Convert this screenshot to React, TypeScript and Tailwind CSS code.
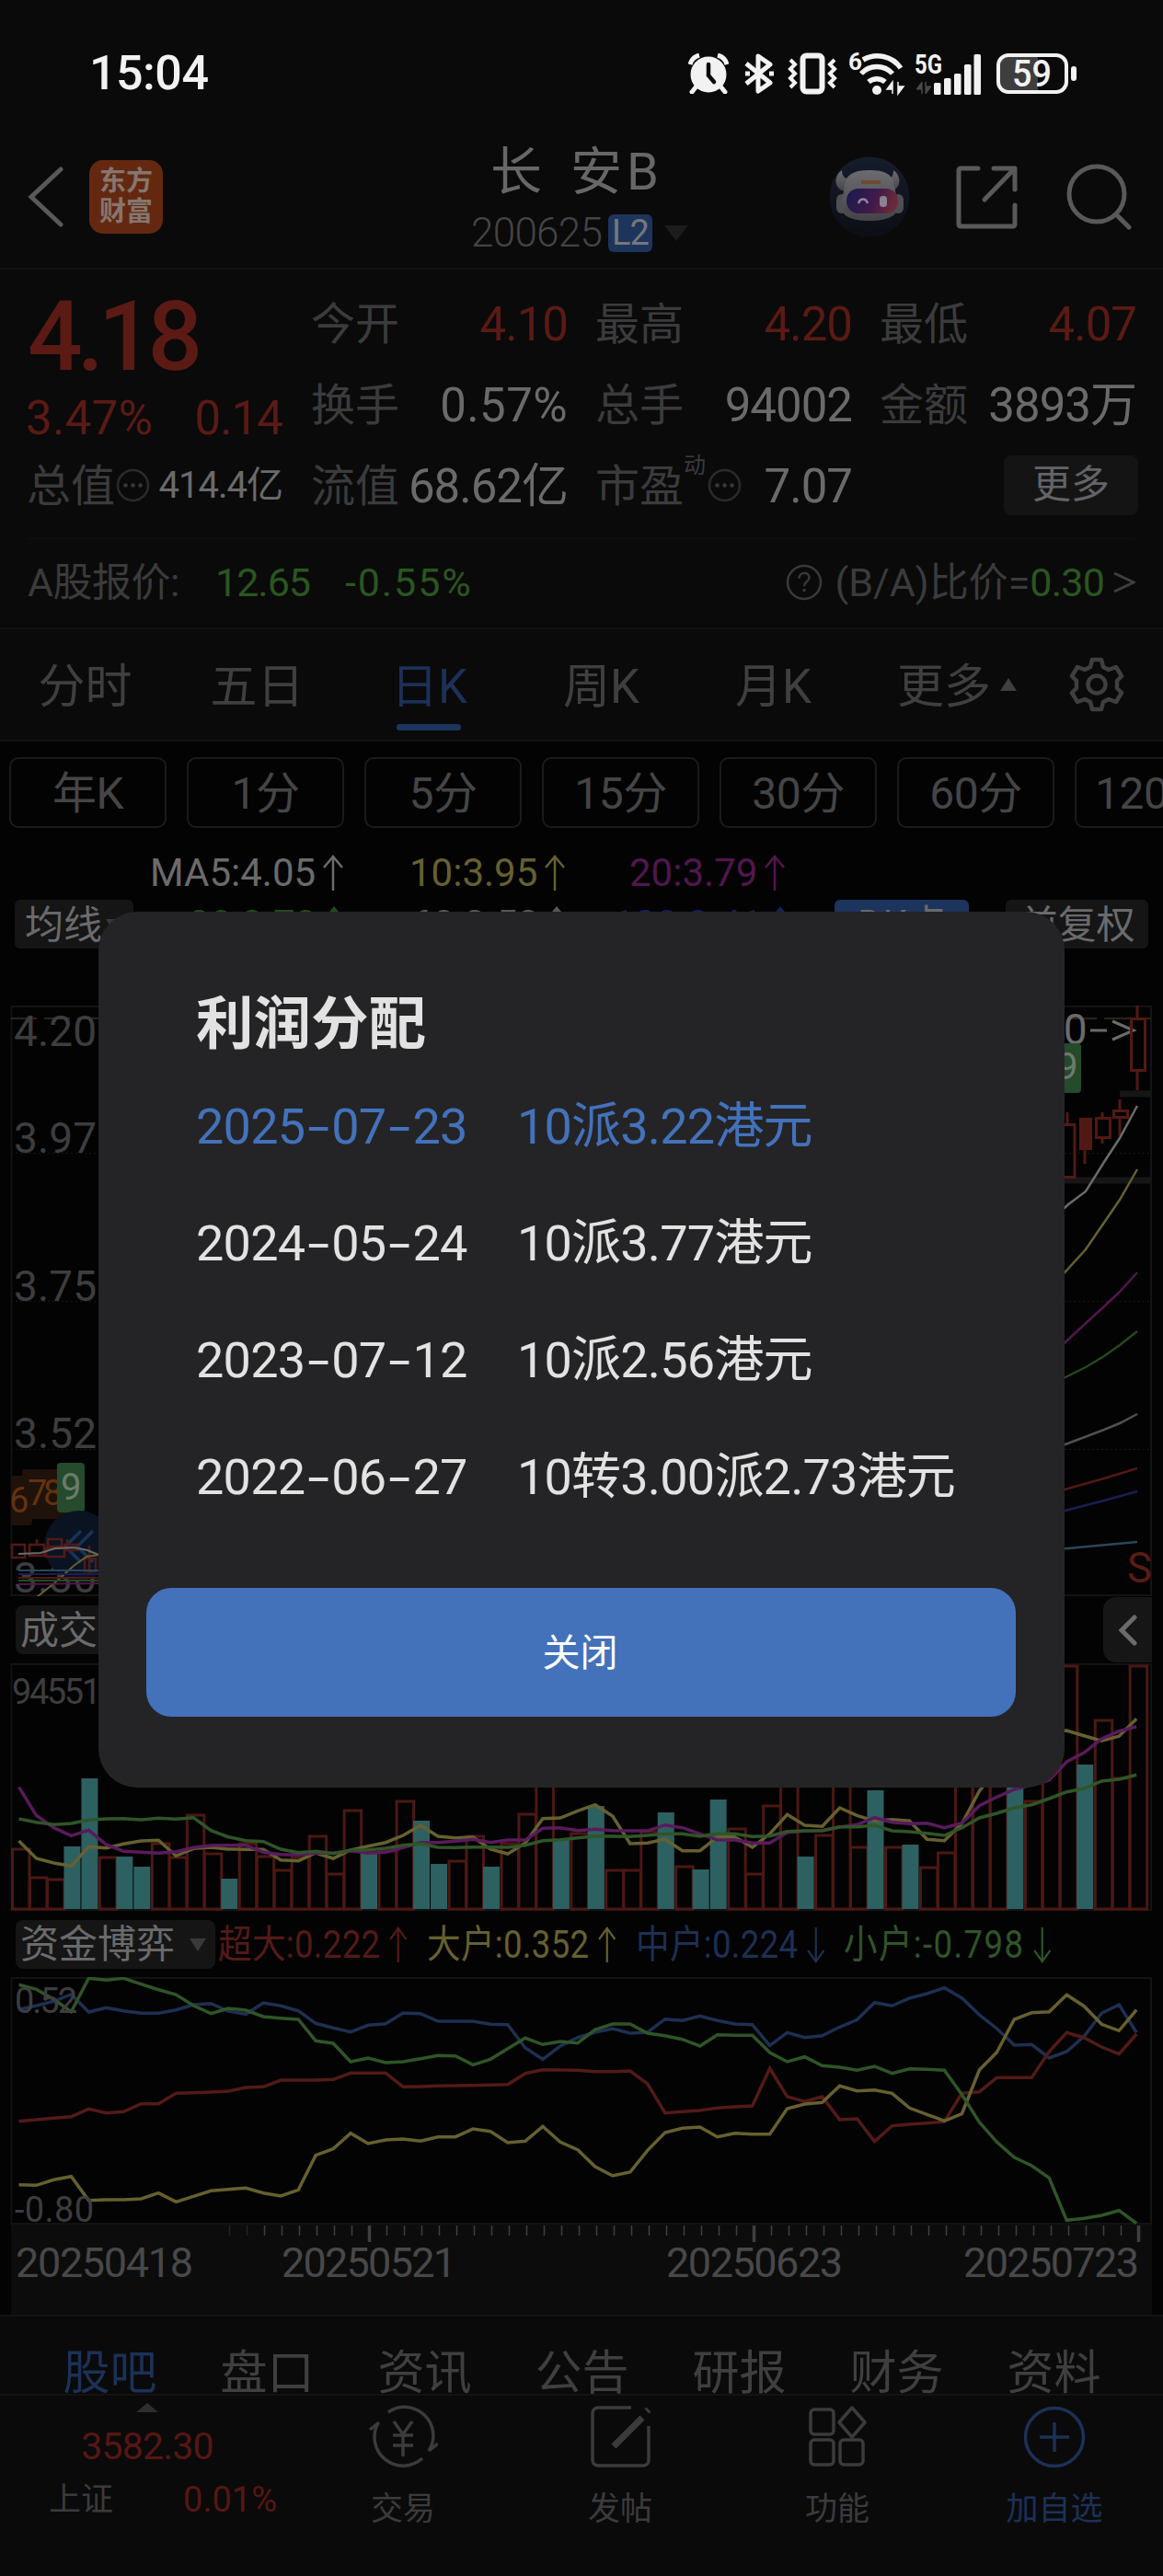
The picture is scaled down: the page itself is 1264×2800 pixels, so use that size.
import React from "react";

const SLOT = 18.98;

type Bar = [number, "u" | "d"];

const volumeBars: Bar[] = [
  [2009, "u"], [2040, "u"], [2042, "u"], [2007, "d"], [1933, "d"], [2018, "u"], [2018, "d"], [2029, "d"],
  [2003, "u"], [2018, "u"], [1972, "u"], [2014, "u"], [2042, "d"], [2003, "u"], [2017, "u"], [2032, "u"],
  [2018, "u"], [1995, "u"], [2036, "u"], [1967, "u"], [2015, "d"], [2011, "u"], [1957, "u"], [1979, "d"],
  [2026, "d"], [2022, "u"], [1995, "u"], [2029, "d"], [2003, "u"], [1971, "u"], [1900, "u"], [2000, "d"],
  [1992, "u"], [1963, "d"], [2032, "u"], [2032, "u"], [1990, "u"], [1970, "d"], [2028, "u"], [2032, "d"],
  [1956, "d"], [1987, "u"], [2036, "u"], [1962, "u"], [1880, "u"], [2018, "d"], [1994, "u"], [1880, "u"],
  [2007, "u"], [1946, "d"], [2007, "u"], [2005, "d"], [2029, "u"], [2013, "u"], [1880, "u"], [1840, "u"],
  [1830, "u"], [1900, "d"], [1957, "u"], [1880, "u"], [1810, "u"], [1918, "d"], [1869, "u"], [1932, "u"],
  [1810, "u"],
];

// Line values are stored in thirds of a pixel below the panel origin
const volumeLines = [
  {
    stroke: "#66602f",
    values: [663, 720, 735, 745, 682, 686, 673, 663, 661, 712, 688, 684, 690, 691, 691, 725, 728, 702, 720, 693, 680, 668, 645, 612, 648, 653, 650, 690, 705, 670, 590, 588, 565, 545, 582, 672, 670, 657, 695, 695, 650, 650, 684, 640, 577, 612, 616, 555, 580, 598, 593, 598, 658, 662, 607, 500, 430, 370, 330, 305, 303, 320, 337, 322, 265],
  },
  {
    stroke: "#5a1a5c",
    values: [487, 580, 620, 646, 628, 675, 697, 700, 703, 698, 685, 678, 677, 677, 700, 707, 708, 703, 703, 695, 703, 700, 685, 668, 668, 664, 658, 668, 660, 660, 622, 620, 629, 625, 629, 630, 630, 611, 620, 640, 660, 660, 670, 670, 635, 631, 630, 618, 610, 587, 602, 607, 605, 620, 605, 548, 520, 495, 480, 465, 405, 375, 330, 305, 290],
  },
  {
    stroke: "#2f5527",
    values: [591, 602, 610, 606, 595, 591, 590, 594, 589, 592, 587, 629, 650, 662, 665, 690, 701, 697, 704, 693, 692, 687, 677, 672, 684, 685, 683, 683, 684, 677, 662, 659, 653, 647, 648, 649, 645, 640, 640, 648, 640, 640, 649, 647, 632, 630, 629, 617, 617, 612, 630, 633, 638, 645, 620, 588, 573, 555, 545, 525, 503, 492, 468, 462, 448],
  },
];

const fundLines = [
  {
    stroke: "#1d3052",
    values: [313, 300, 286, 263, 321, 307, 317, 325, 325, 314, 297, 293, 318, 328, 291, 301, 317, 358, 373, 386, 364, 359, 324, 326, 351, 351, 351, 361, 362, 438, 475, 432, 404, 387, 375, 390, 387, 344, 349, 334, 349, 360, 362, 430, 388, 404, 398, 370, 346, 290, 301, 276, 261, 242, 275, 330, 375, 429, 427, 471, 450, 400, 325, 297, 388],
  },
  {
    stroke: "#531a17",
    values: [677, 672, 667, 662, 637, 650, 646, 620, 620, 586, 584, 582, 579, 567, 565, 543, 543, 543, 541, 520, 520, 520, 565, 564, 562, 561, 560, 559, 557, 521, 509, 510, 511, 515, 515, 513, 555, 650, 646, 642, 634, 630, 627, 505, 597, 613, 597, 672, 669, 743, 692, 687, 683, 678, 586, 581, 535, 535, 535, 450, 388, 405, 435, 458, 393],
  },
  {
    stroke: "#66602f",
    values: [884, 886, 868, 857, 935, 933, 933, 930, 911, 940, 922, 904, 899, 895, 911, 921, 901, 788, 767, 716, 750, 738, 735, 742, 728, 728, 702, 710, 747, 742, 694, 745, 770, 825, 855, 843, 772, 714, 700, 696, 728, 716, 719, 719, 636, 621, 616, 562, 578, 575, 586, 634, 655, 676, 653, 510, 452, 345, 323, 320, 265, 302, 361, 382, 314],
  },
  {
    stroke: "#2f5527",
    values: [232, 247, 280, 320, 211, 217, 211, 230, 248, 264, 300, 326, 309, 315, 336, 341, 345, 415, 423, 483, 471, 486, 483, 473, 463, 464, 493, 475, 440, 406, 427, 417, 422, 378, 360, 360, 390, 398, 410, 432, 395, 397, 397, 453, 483, 467, 496, 501, 511, 498, 521, 506, 508, 511, 590, 680, 745, 795, 822, 862, 1000, 994, 984, 968, 1010],
  },
];

const toPoints = (values: number[], origin: number) =>
  values.map((v, i) => `${(20.5 + i * SLOT).toFixed(1)},${(origin + v / 3).toFixed(1)}`).join(" ");

const dividends = [
  { date: "2025-07-23", plan: "10派3.22港元", active: true },
  { date: "2024-05-24", plan: "10派3.77港元" },
  { date: "2023-07-12", plan: "10派2.56港元" },
  { date: "2022-06-27", plan: "10转3.00派2.73港元" },
];

const StatusBar: React.FC = () => (
  <div className="flex h-[159px] items-center pl-[97px] text-[#f2f2f2]">
    <span className="w-[650px] text-[52px] leading-none font-medium tracking-[-0.5px]">15:04</span>
    {/* alarm */}
    <svg className="h-[44px] w-[45px]" viewBox="0 0 45 44" fill="none" stroke="#f2f2f2">
      <circle cx="23" cy="23" r="19.5" fill="#f2f2f2" stroke="none" />
      <path d="M3 12a14 14 0 0 1 10-10M43 12a14 14 0 0 0-10-10" strokeWidth="5" />
      <path d="M9 37l-4 5M37 37l4 5" strokeWidth="5" strokeLinecap="round" />
      <path d="M23 12v12l6 7" stroke="#0a0a0a" strokeWidth="4.5" strokeLinecap="round" />
    </svg>
    {/* bluetooth */}
    <svg className="ml-[16px] h-[44px] w-[34px]" viewBox="0 0 34 44" fill="none" stroke="#f2f2f2" strokeWidth="5">
      <path d="M3 11l26 21-13 9V3l13 9L3 33" strokeLinejoin="round" />
      <path d="M2 22h5M28 22h5" strokeWidth="5" />
    </svg>
    {/* vibrate */}
    <svg className="ml-[14px] h-[46px] w-[54px]" viewBox="0 0 54 46" fill="none" stroke="#f2f2f2" strokeWidth="5">
      <rect x="16.500" y="3.500" width="21" height="39" rx="4" strokeWidth="6" />
      <path d="M3 8l5 5-5 5 5 5-5 5 5 5-5 5M51 8l-5 5 5 5-5 5 5 5-5 5 5 5" strokeWidth="4" />
    </svg>
    {/* wifi */}
    <svg className="ml-[12px] h-[48px] w-[64px] overflow-visible" viewBox="0 0 64 48" fill="none" stroke="#f2f2f2" strokeWidth="5.500">
      <text x="0" y="20" fontSize="26" fontWeight="700" fill="#f2f2f2" stroke="none" textLength="13">6</text>
      <path d="M16 9a31 31 0 0 1 41 9" />
      <path d="M14 24a23 23 0 0 1 34 0" />
      <path d="M22 33a14 14 0 0 1 18 0" />
      <circle cx="31" cy="42" r="5" fill="#f2f2f2" stroke="none" />
      <path d="M48 46V33l-6 8h6zM54 33v13l6-8h-6z" fill="#f2f2f2" strokeWidth="1.500" />
    </svg>
    {/* cellular */}
    <svg className="ml-[8px] h-[48px] w-[74px] overflow-visible" viewBox="0 0 74 48" fill="#f2f2f2">
      <text x="0" y="24" fontSize="30" fontWeight="700" textLength="30" lengthAdjust="spacingAndGlyphs">5G</text>
      <path d="M8 46V33l-6 8h6zM12 33v13l6-8h-6z" fill="#4a4a4a" stroke="#4a4a4a" />
      <rect x="21" y="34" width="7.500" height="13" rx="1.500" />
      <rect x="32" y="29" width="7.500" height="18" rx="1.500" />
      <rect x="43" y="24" width="7.500" height="23" rx="1.500" />
      <rect x="54" y="14" width="7.500" height="33" rx="1.500" />
      <rect x="64.500" y="3" width="7.500" height="44" rx="1.500" />
    </svg>
    {/* battery */}
    <svg className="ml-[15px] h-[44px] w-[88px] overflow-visible" viewBox="0 0 88 44">
      <path d="M13 4h32v36H13a9 9 0 0 1-9-9V13a9 9 0 0 1 9-9z" fill="#3e3e3e" />
      <rect x="2" y="2" width="74" height="40" rx="11" fill="none" stroke="#f2f2f2" strokeWidth="4" />
      <rect x="81" y="14" width="6" height="16" rx="3" fill="#f2f2f2" />
      <text x="17" y="36" fontSize="40" fontWeight="500" fill="#f2f2f2" textLength="43" lengthAdjust="spacingAndGlyphs">59</text>
    </svg>
  </div>
);

const Header: React.FC = () => (
  <div className="flex h-[134px] border-b-2 border-[#131314]">
    <div className="flex h-[110px] w-[514px] items-center pl-[30px]">
      <svg className="h-[66px] w-[40px]" viewBox="0 0 40 66" fill="none" stroke="#59595b" strokeWidth="5" strokeLinecap="round">
        <path d="M36 3L4 33l32 30" />
      </svg>
      <div className="ml-[27px] flex h-[80px] w-[80px] flex-col items-center justify-center rounded-[15px] bg-[#642811] text-[29px] leading-[33px] font-bold text-[#85766f]">
        <span>东方</span>
        <span>财富</span>
      </div>
    </div>
    <div className="flex w-[387px] flex-col">
      <span className="pt-[2px] pl-[19px] text-[56px] leading-[52px] tracking-[5px] whitespace-pre text-[#676769] [word-spacing:7px]">长 安B</span>
      <div className="mt-[18px] flex h-[44px] items-center">
        <span className="-ml-[2px] w-[149px] text-[44px] leading-none font-light tracking-[-0.7px] text-[#444446]">200625</span>
        <span className="flex h-[41px] w-[48px] items-center justify-center rounded-[6px] bg-[#1d345d] text-[38px] leading-none tracking-[-1px] text-[#77777a]">L2</span>
        <svg className="ml-[13px] h-[17px] w-[26px]" viewBox="0 0 26 17">
          <path d="M0 0h26L13 17z" fill="#1c1c1e" />
        </svg>
      </div>
    </div>
    <div className="flex h-[110px] items-center">
      <svg className="h-[88px] w-[88px]" viewBox="0 0 88 88">
        <defs>
          <linearGradient id="shell" x1="0" y1="0" x2="0" y2="1">
            <stop offset="0" stopColor="#6c6c70" />
            <stop offset="1" stopColor="#444448" />
          </linearGradient>
          <linearGradient id="visor" x1="0" y1="0" x2="1" y2="0.200">
            <stop offset="0" stopColor="#191a4c" />
            <stop offset="0.600" stopColor="#3f1a4c" />
            <stop offset="1" stopColor="#6b2a38" />
          </linearGradient>
          <linearGradient id="halo" x1="0" y1="0" x2="0" y2="1">
            <stop offset="0" stopColor="#151c2c" />
            <stop offset="1" stopColor="#0c0e14" />
          </linearGradient>
        </defs>
        <circle cx="44" cy="44" r="43.500" fill="url(#halo)" />
        <path d="M14 15c-9 6-9 20 3 23l9-14c-8 2-12-2-12-9zM70 15c9 6 9 20-3 23l-7-14c7 2 10-2 10-9z" fill="url(#shell)" />
        <rect x="8" y="41" width="12" height="21" rx="6" fill="#4f4f53" />
        <rect x="69" y="41" width="12" height="21" rx="6" fill="#4f4f53" />
        <path d="M17 32c1-13 11-17 27-17s26 4 27 17l4 22c0 11-12 16-31 16s-31-5-31-16z" fill="url(#shell)" />
        <rect x="19" y="35" width="56" height="27" rx="13" fill="url(#visor)" />
        <path d="M32 51c2-6 8-6 10 0" fill="none" stroke="#8d86a5" strokeWidth="2.500" />
        <rect x="55" y="43" width="8" height="12" rx="3.500" fill="#8d8290" />
        <path d="M35 28h21" stroke="#6f4a30" strokeWidth="4" />
      </svg>
      <svg className="ml-[49px] h-[70px] w-[70px]" viewBox="0 0 70 70" fill="none" stroke="#59595b" strokeWidth="5" strokeLinecap="round" strokeLinejoin="round">
        <path d="M25 4H6a2 2 0 0 0-2 2v59a2 2 0 0 0 2 2h57a2 2 0 0 0 2-2V44M42 4h23v23M63 6L32 38" />
      </svg>
      <svg className="ml-[51px] h-[72px] w-[72px]" viewBox="0 0 72 72" fill="none" stroke="#59595b" strokeWidth="5" strokeLinecap="round">
        <circle cx="33" cy="33" r="30" />
        <path d="M55 56l13 13" />
      </svg>
    </div>
  </div>
);

const MoreDots: React.FC<{ className?: string }> = ({ className = "" }) => (
  <svg className={`h-[37px] w-[37px] shrink-0 ${className}`} viewBox="0 0 37 37">
    <circle cx="18.500" cy="18.500" r="16.500" fill="none" stroke="#2b2b2d" strokeWidth="2.500" />
    <circle cx="10.500" cy="18.500" r="2.300" fill="#39393b" />
    <circle cx="18.500" cy="18.500" r="2.300" fill="#39393b" />
    <circle cx="26.500" cy="18.500" r="2.300" fill="#39393b" />
  </svg>
);

interface QuoteCellProps {
  label: string;
  value: string;
  up?: boolean;
}

const QuoteCell: React.FC<QuoteCellProps> = ({ label, value, up }) => (
  <div className="flex h-[88px] items-center justify-between whitespace-nowrap">
    <span className="-ml-[1px] pt-[4px] text-[48px] leading-none text-[#3b3b3d]">{label}</span>
    <span
      className={`-mr-[1px] pt-[2px] text-[51px] leading-none ${value.endsWith("%") ? "tracking-[0.4px]" : "tracking-[-1px]"} ${
        up ? "text-[#5b1a14]" : "text-[#6a6a6c]"
      }`}
    >
      {value}
    </span>
  </div>
);

const Quote: React.FC = () => (
  <div className="h-[391px] border-b-2 border-[#131314] px-[30px] pt-[14px]">
    <div className="grid grid-cols-4 gap-x-8">
      <div className="text-[#5b1a14]">
        <div className="flex h-[116px] items-center pt-[3px] text-[105px] leading-none font-medium tracking-[-6px]">4.18</div>
        <div className="flex h-[60px] items-center justify-between pt-[2px] text-[51px] leading-none tracking-[-1px]">
          <span className="-ml-[2px] tracking-[0.3px]">3.47%</span>
          <span>0.14</span>
        </div>
        <div className="flex h-[88px] items-center whitespace-nowrap">
          <span className="-ml-[1px] pt-[4px] text-[48px] leading-none text-[#3b3b3d]">总值</span>
          <MoreDots className="ml-px" />
          <span className="ml-auto pt-[2px] text-[40px] leading-none tracking-[-1px] text-[#6a6a6c]">414.4亿</span>
        </div>
      </div>
      <div>
        <QuoteCell label="今开" value="4.10" up />
        <QuoteCell label="换手" value="0.57%" />
        <QuoteCell label="流值" value="68.62亿" />
      </div>
      <div>
        <QuoteCell label="最高" value="4.20" up />
        <QuoteCell label="总手" value="94002" />
        <div className="flex h-[88px] items-center text-[#3b3b3d]">
          <span className="-ml-[1px] pt-[4px] text-[48px] leading-none">市盈</span>
          <span className="mb-[42px] text-[24px] leading-none">动</span>
          <MoreDots className="ml-[2px]" />
          <span className="-mr-[1px] ml-auto pt-[2px] text-[51px] leading-none tracking-[-1px] text-[#6a6a6c]">7.07</span>
        </div>
      </div>
      <div>
        <QuoteCell label="最低" value="4.07" up />
        <QuoteCell label="金额" value="3893万" />
        <div className="flex h-[88px] items-center justify-end">
          <span className="-mr-[3px] flex h-[65px] w-[146px] items-center justify-center rounded-[8px] bg-[#141415] text-[42px] leading-none text-[#646466]">更多</span>
        </div>
      </div>
    </div>
    <div className="mt-[14px] h-px bg-[#101011]" />
    <div className="flex h-[92px] items-center pt-[2px] text-[43px] leading-none text-[#3b3b3d]">
      <span className="w-[204px] tracking-[-0.5px]">A股报价:</span>
      <span className="w-[141px] tracking-[-1px] text-[#2a5620]">12.65</span>
      <span className="tracking-[1.900px] text-[#2a5620]">-0.55%</span>
      <svg className="ml-auto h-[42px] w-[42px]" viewBox="0 0 42 42" fill="none" stroke="#39393b" strokeWidth="2.500">
        <circle cx="21" cy="21" r="18" />
        <path d="M15.500 17c0-8 11-8 11-1 0 4-5.500 4-5.500 9" />
        <path d="M21 28v3" strokeWidth="3" />
      </svg>
      <span className="ml-[12px]">(B/A)比价=</span>
      <span className="tracking-[-0.8px] text-[#2a5620]">0.30</span>
      <svg className="ml-[10px] h-[24px] w-[24px]" viewBox="0 0 24 24" fill="none" stroke="#3f3f41" strokeWidth="3">
        <path d="M1 2l21 10L1 22" />
      </svg>
    </div>
  </div>
);

const PeriodTabs: React.FC = () => (
  <>
    <div className="flex h-[122px] items-center border-b-2 border-[#131314] text-[51px] leading-none text-[#3f3f41]">
      {["分时", "五日", "日K", "周K", "月K"].map((tab) => (
        <span key={tab} className={`relative w-[187px] pt-[4px] text-center ${tab === "日K" ? "text-[#1c3157]" : ""}`}>
          <span className="-ml-[2px]">{tab}</span>
          {tab === "日K" && <span className="absolute -bottom-[22px] left-[57px] h-[7px] w-[70px] rounded-[3px] bg-[#1d345d]" />}
        </span>
      ))}
      <span className="ml-[40px] pt-[4px]">更多</span>
      <svg className="ml-[10px] h-[14px] w-[18px]" viewBox="0 0 18 14">
        <path d="M9 0l9 14H0z" fill="#3f3f41" />
      </svg>
      <svg className="ml-[57px] h-[60px] w-[60px]" viewBox="0 0 60 60" fill="none" stroke="#3f3f41" strokeWidth="4.500" strokeLinejoin="round">
        <path d="M25 3h10l2 8 6 3 8-3 6 10-5 5v8l5 5-6 10-8-3-6 3-2 8H25l-2-8-6-3-8 3-6-10 5-5v-8l-5-5 6-10 8 3 6-3z" />
        <circle cx="30" cy="30" r="9.500" />
      </svg>
    </div>
    <div className="flex gap-[22px] overflow-hidden bg-[#030303] pt-[17px] pl-[10px] text-[48px] leading-none text-[#454547]">
      {["年K", "1分", "5分", "15分", "30分", "60分", "120分"].map((period) => (
        <span key={period} className="flex h-[77px] w-[171px] shrink-0 items-center justify-center rounded-[10px] border-2 border-[#1b1b1c] pt-[2px] tracking-[-0.5px] whitespace-nowrap">
          {period}
        </span>
      ))}
    </div>
  </>
);

const Arrow: React.FC<{ down?: boolean }> = ({ down }) => (
  <svg className={`h-[40px] w-[22px] shrink-0 ${down ? "rotate-180" : ""}`} viewBox="0 0 22 40" fill="none" stroke="currentColor" strokeWidth="2.500">
    <path d="M11 39V2M1 14L11 2l10 12" />
  </svg>
);

const Average: React.FC<{ className: string; text: string }> = ({ className, text }) => (
  <span className={`flex shrink-0 items-center gap-[8px] ${className}`}>
    {text}
    <Arrow />
  </span>
);

const Triangle: React.FC<{ className?: string }> = ({ className = "" }) => (
  <svg className={`h-[14px] w-[18px] shrink-0 ${className}`} viewBox="0 0 18 14">
    <path d="M0 0h18L9 14z" fill="#39393b" />
  </svg>
);

const Averages: React.FC = () => (
  <div className="h-[193px] bg-[#030303] pt-[24px] text-[42px] leading-none">
    <div className="flex h-[50px] items-center pl-[163px]">
      <Average className="w-[282px] text-[#6b6b6b]" text="MA5:4.05" />
      <Average className="w-[239px] text-[#66602f]" text="10:3.95" />
      <Average className="text-[#51164f]" text="20:3.79" />
    </div>
    <div className="mt-[4px] flex h-[53px] items-center pl-[16px]">
      <span className="flex h-[53px] w-[129px] items-center rounded-[6px] bg-[#151516] pt-[2px] pl-[11px] text-[#6a6a6c]">
        均线
        <Triangle className="ml-[4px]" />
      </span>
      <Average className="ml-[60px] w-[242px] text-[#244a1c]" text="30:3.73" />
      <Average className="w-[219px] text-[#58585a]" text="60:3.53" />
      <Average className="w-[241px] text-[#17205a]" text="120:3.41" />
      <span className="flex h-[53px] w-[146px] items-center justify-center rounded-[6px] bg-[#1d345d] text-[#6a6a6c]">DK点</span>
      <span className="ml-[40px] flex h-[53px] w-[155px] items-center justify-center rounded-[6px] bg-[#151516] pt-[2px] text-[#6a6a6c]">前复权</span>
    </div>
  </div>
);

const KLine: React.FC = () => (
  <svg className="block h-[642px] w-[1264px] bg-[#030303]" viewBox="0 1093 1264 642" fill="none">
    <rect x="12.500" y="1094" width="1238.500" height="640" stroke="#131314" strokeWidth="2" />
    <path d="M12 1253.500h1239M12 1414.500h1239M12 1575.500h1239" stroke="#18181a" strokeDasharray="2 3" />
    <path d="M12 1107h1239" stroke="#3b2f22" strokeWidth="1.500" strokeDasharray="28 8" />
    <g fill="#3d3d3f" fontSize="46">
      {[["4.20", 1137], ["3.97", 1253], ["3.75", 1414], ["3.52", 1574], ["3.30", 1731]].map(([label, y]) => (
        <text key={label} x="15" y={y} textLength="90">{label}</text>
      ))}
    </g>
    {/* sequence markers */}
    <g fill="#1f120a">
      <rect x="12" y="1604" width="23" height="54" rx="3" />
      <rect x="24" y="1597" width="29" height="54" rx="3" />
      <rect x="43" y="1597" width="30" height="54" rx="3" />
    </g>
    <g fill="#63320f" fontSize="38">
      <text x="10" y="1644">6</text>
      <text x="30" y="1636">7</text>
      <text x="47" y="1636">8</text>
    </g>
    <rect x="62" y="1590" width="30" height="54" rx="4" fill="#254a2c" />
    <text x="66" y="1630" fontSize="40" fill="#6c7a6e">9</text>
    <circle cx="86" cy="1680" r="38" fill="#091322" />
    <path d="M88 1664l-17 17 17 17M101 1664l-17 17 17 17" stroke="#1a3257" strokeWidth="3.500" />
    <g stroke="#521914" strokeWidth="2.500">
      <rect x="13" y="1679" width="14" height="14" />
      <path d="M40 1673v6M32 1679h16v12h-16zM52 1673h15v8h-15zM50 1683h20v9h-20zM73 1673v6M70 1679h14v6h-14z" />
      <path d="M97 1680v30M92 1694h12v14h-12z" />
    </g>
    <path d="M20 1689l24-1 16-5 20-1 15 3 12 5" stroke="#6b6b6b" strokeWidth="2" />
    <path d="M40 1736l20-16 20-18 14-10 20-3" stroke="#66602f" strokeWidth="2" />
    <path d="M20 1707h90" stroke="#2c4658" strokeWidth="2" />
    <path d="M20 1711h90" stroke="#191f52" strokeWidth="2" />
    <path d="M20 1715h90" stroke="#521914" strokeWidth="2" />
    <path d="M20 1718h90" stroke="#244a1c" strokeWidth="2" />
    <path d="M20 1722l90-1" stroke="#51164f" strokeWidth="2" />

    {/* right edge of the series */}
    <text x="1092" y="1135" fontSize="46" fill="#6b6b6b">4.20</text>
    <path d="M1185 1120h18M1209 1110l23 10-23 10" stroke="#6b6b6b" strokeWidth="3" />
    <rect x="1145" y="1134" width="30" height="54" rx="4" fill="#254a2c" />
    <text x="1149" y="1173" fontSize="40" fill="#6c7a6e">9</text>
    <path d="M1217 1189h34M1157 1283h94" stroke="#161617" strokeWidth="7" />
    <g stroke="#521914" strokeWidth="3">
      <path d="M1236 1093v14M1236 1164v21M1229.500 1107.500h15v56h-15z" />
      <path d="M1160 1209v13M1151 1222.500h17v57h-17z" />
      <path d="M1198 1209v6M1198 1237v6M1191.500 1215.500h15v21h-15z" />
      <path d="M1217 1195v12M1217 1215v20M1210.500 1207.500h15v7h-15z" />
      <path d="M1179 1250v15" />
    </g>
    <rect x="1173" y="1215" width="14" height="35" fill="#521914" />
    <g strokeWidth="2.500">
      <path d="M1150 1320l10-10 20-15 20-32 17-26 19-35" stroke="#6b6b6b" />
      <path d="M1150 1391l30-33 37-54 19-33" stroke="#66602f" />
      <path d="M1150 1466l50-46 17-16 19-21" stroke="#51164f" />
      <path d="M1150 1501l30-15 20-12 17-12 19-15" stroke="#244a1c" />
      <path d="M1150 1573l50-19 17-7 19-10" stroke="#505052" />
      <path d="M1150 1621l50-14 36-11" stroke="#521914" />
      <path d="M1150 1644l50-13 36-10" stroke="#191f52" />
      <path d="M1150 1684l86-8" stroke="#2c4658" />
    </g>
    <text x="1225" y="1720" fontSize="46" fill="#5b1a14" textLength="27" lengthAdjust="spacingAndGlyphs">S</text>
  </svg>
);

const Volume: React.FC = () => (
  <>
    <div className="flex h-[73px] items-center justify-between bg-[#030303] pr-[12px] pl-[17px]">
      <span className="flex h-[53px] w-[190px] items-center rounded-[8px] bg-[#151516] pt-[2px] pl-[5px] text-[42px] leading-none text-[#6a6a6c]">成交量</span>
      <span className="flex h-[71px] w-[53px] items-center justify-center rounded-l-[14px] bg-[#161617]">
        <svg className="h-[34px] w-[20px]" viewBox="0 0 20 34" fill="none" stroke="#6b6b6b" strokeWidth="5" strokeLinecap="round">
          <path d="M17 3L3 17l14 14" />
        </svg>
      </span>
    </div>
    <svg className="block h-[270px] w-[1264px] bg-[#030303]" viewBox="0 1808 1264 270" fill="none">
      <rect x="12.500" y="1809" width="1238.500" height="267" stroke="#131314" strokeWidth="2" />
      <text x="13" y="1852" fontSize="38" fill="#3d3d3f" textLength="97">94551</text>
      {volumeBars.map(([top, dir], i) => {
        const x = 12.5 + i * SLOT;
        return dir === "d" ? (
          <rect key={i} x={x} y={top} width="18" height={2075 - top} fill="#2d6061" />
        ) : (
          <rect key={i} x={x + 1} y={top + 1} width="18.5" height={2074 - top} stroke="#4c1814" strokeWidth="3" />
        );
      })}
      {volumeLines.map((line) => (
        <polyline key={line.stroke} points={toPoints(line.values, 1780)} stroke={line.stroke} strokeWidth="3.500" />
      ))}
    </svg>
  </>
);

const FundStat: React.FC<{ className: string; text: string; down?: boolean }> = ({ className, text, down }) => (
  <span className={`h-[42px] shrink-0 ${className}`}>
    <span className="flex origin-left scale-x-[.87] items-center gap-[11px] whitespace-nowrap">
      {text}
      <Arrow down={down} />
    </span>
  </span>
);

const FundFlow: React.FC = () => (
  <>
    <div className="flex h-[71px] items-center bg-[#030303] pl-[17px] text-[42px] leading-none">
      <span className="flex h-[53px] w-[217px] items-center rounded-[8px] bg-[#151516] pt-px pl-[5px] text-[#6a6a6c]">
        资金博弈
        <Triangle className="ml-[16px]" />
      </span>
      <FundStat className="ml-[3px] w-[227px] tracking-[0.4px] text-[#531a17]" text="超大:0.222" />
      <FundStat className="w-[227px] tracking-[0.4px] text-[#66602f]" text="大户:0.352" />
      <FundStat className="w-[226px] tracking-[0.4px] text-[#1d3052]" text="中户:0.224" down />
      <FundStat className="w-[240px] tracking-[1.600px] text-[#2f5527]" text="小户:-0.798" down />
    </div>
    <svg className="block h-[269px] w-[1264px] bg-[#030303]" viewBox="0 2149 1264 269" fill="none">
      <rect x="12.500" y="2150" width="1238.500" height="267" stroke="#131314" strokeWidth="2" />
      {fundLines.map((line) => (
        <polyline key={line.stroke} points={toPoints(line.values, 2080)} stroke={line.stroke} strokeWidth="3.500" />
      ))}
      <g fill="#3d3d3f" fontSize="38">
        <text x="16" y="2188" textLength="68">0.52</text>
        <text x="16" y="2415" textLength="86">-0.80</text>
      </g>
    </svg>
    <div className="bg-[#030303] px-[12px]">
      <svg className="block h-[98px] w-[1240px] bg-[#0c0c0c]" viewBox="12 2418 1240 98" fill="none">
        {Array.from({ length: 53 }, (_, i) => i + 12).map((i) => {
          const major = i === 20 || i === 42 || i === 64;
          return (
            <path
              key={i}
              d={`M${21.5 + i * 19} 2419v${major ? 18 : 11}`}
              stroke={i < 14 ? "#232324" : "#3f3f41"}
              strokeWidth={major ? 3.5 : 1.5}
            />
          );
        })}
        <g fill="#48484a" fontSize="45">
          <text x="17" y="2475" textLength="193">20250418</text>
          <text x="306" y="2475" textLength="190">20250521</text>
          <text x="724" y="2475" textLength="192">20250623</text>
          <text x="1047" y="2475" textLength="191">20250723</text>
        </g>
      </svg>
    </div>
  </>
);

const navItems = [
  {
    label: "交易",
    icon: (
      <>
        <path d="M22 10A31 31 0 0 1 66 52M59 60A31 31 0 0 1 11 22M2 29l10-8M76 44l-10 8" />
        <path d="M28 20l10 14 10-14M38 34v24M27 35h22M27 46h22" />
      </>
    ),
  },
  {
    label: "发帖",
    icon: (
      <>
        <path d="M50 5H14a6 6 0 0 0-6 6v51a6 6 0 0 0 6 6h50a6 6 0 0 0 5-6V25" />
        <path d="M62 16L31 47" strokeWidth="7" />
        <path d="M67 9l2-2" strokeWidth="7" />
      </>
    ),
  },
  {
    label: "功能",
    icon: (
      <>
        <rect x="9" y="7" width="25" height="27" rx="4" />
        <rect x="9" y="40" width="25" height="27" rx="4" />
        <rect x="41" y="40" width="25" height="27" rx="4" />
        <path d="M54 5l14 16-14 16-14-16z" strokeLinejoin="round" />
      </>
    ),
  },
  {
    label: "加自选",
    active: true,
    icon: (
      <>
        <circle cx="38" cy="37" r="31.500" />
        <path d="M38 21v32M22 37h32" />
      </>
    ),
  },
];

const BottomNav: React.FC = () => (
  <>
    <div className="flex h-[86px] overflow-hidden border-t-2 border-[#131314] pt-[36px] pl-[34px] text-[51px] leading-none text-[#3f3f41]">
      {["股吧", "盘口", "资讯", "公告", "研报", "财务", "资料"].map((tab) => (
        <span key={tab} className={`w-[171px] text-center ${tab === "股吧" ? "text-[#1c3157]" : ""}`}>
          {tab}
        </span>
      ))}
    </div>
    <div className="flex h-[198px] border-t-2 border-[#131314] text-[35px] leading-none text-[#3b3b3d]">
      <div className="flex w-[320px] flex-col items-center pt-[8px]">
        <svg className="h-[10px] w-[24px]" viewBox="0 0 24 10">
          <path d="M12 0l12 10H0z" fill="#2e2e30" />
        </svg>
        <span className="mt-[17px] text-[41px] leading-none tracking-[-0.8px] text-[#551713]">3582.30</span>
        <div className="mt-[18px] ml-[34px] flex w-[248px] items-center justify-between">
          <span className="pt-px">上证</span>
          <span className="text-[38px] leading-none text-[#551713]">0.01%</span>
        </div>
      </div>
      {navItems.map((item) => (
        <div key={item.label} className={`flex w-[236px] flex-col items-center pt-[8px] ${item.active ? "text-[#1c3157]" : ""}`}>
          <svg className="h-[76px] w-[76px]" viewBox="0 0 76 76" fill="none" stroke="currentColor" strokeWidth="3.500">
            {item.icon}
          </svg>
          <span className="mt-[22px]">{item.label}</span>
        </div>
      ))}
    </div>
  </>
);

const DividendDate: React.FC<{ date: string }> = ({ date }) => (
  <span className="w-[349px]">
    {date.split("").map((char, i) =>
      char === "-" ? (
        <span key={i} className="inline-block w-[29px] scale-x-[1.600] text-center">-</span>
      ) : (
        char
      ),
    )}
  </span>
);

const DividendDialog: React.FC = () => (
  <div className="absolute top-[991px] left-[107px] flex h-[952px] w-[1050px] flex-col rounded-[42px] bg-[#242426] px-[52px] pt-[92px]">
    <h2 className="pl-[54px] text-[62.500px] leading-[62px] font-bold text-[#e2e2e2]">利润分配</h2>
    <div className="mt-[16px] pl-[54px] text-[54px] leading-[127px] tracking-[-0.8px] text-[#e2e2e2]">
      {dividends.map((item) => (
        <div key={item.date} className={`flex whitespace-nowrap ${item.active ? "text-[#4372bb]" : ""}`}>
          <DividendDate date={item.date} />
          <span>{item.plan}</span>
        </div>
      ))}
    </div>
    <button className="mt-[57px] h-[140px] w-[945px] rounded-[27px] bg-[#4372bb] pt-[3px] pr-[2px] text-[41px] leading-none text-white">关闭</button>
  </div>
);

export default function App() {
  return (
    <div className="relative h-[2800px] w-[1264px] overflow-hidden bg-[#0a0a0a] font-['Roboto','Noto_Sans_CJK_SC',sans-serif]">
      <StatusBar />
      <Header />
      <Quote />
      <PeriodTabs />
      <Averages />
      <KLine />
      <Volume />
      <FundFlow />
      <BottomNav />
      <DividendDialog />
    </div>
  );
}
